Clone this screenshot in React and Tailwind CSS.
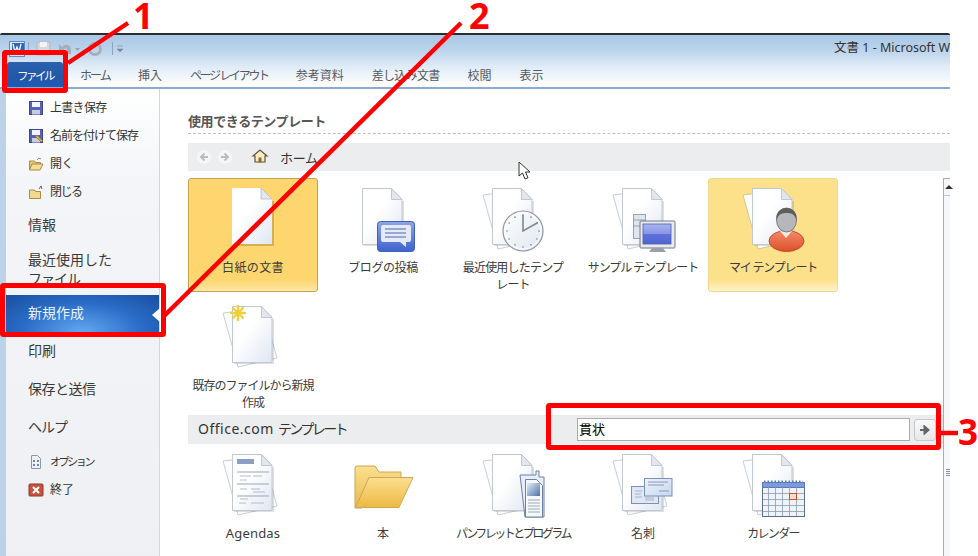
import React from "react";

const Back = () => <path d="M20 11L35 65L74 56L60 6z" fill="#fbfcfd" stroke="#c9ced6" strokeWidth="1" />;
const Doc = ({ fill = "url(#docg)", shadow = true }) => (
  <g>
    {shadow && <path d="M31 61h39V17" fill="none" stroke="#000" strokeOpacity="0.12" strokeWidth="2" />}
    <path d="M29.5 4.5h29l10.5 11v45H29.5z" fill={fill} stroke="#c2c8d1" />
    <path d="M58.5 4.5v11H69z" fill="#e2e6ee" stroke="#c2c8d1" />
  </g>
);

const Ico = ({ children }) => (
  <svg width="100" height="72" viewBox="0 0 100 72" className="shrink-0">
    {children}
  </svg>
);

const Blank = () => (
  <Ico>
    <path d="M31 61h39V17" fill="none" stroke="#8a6a20" strokeOpacity="0.35" strokeWidth="2" />
    <path d="M29 4h29l11 11v45H29z" fill="url(#docg)" />
    <path d="M58 4v11h11z" fill="#e2e6ee" stroke="#b8bcc2" strokeWidth="0.8" />
  </Ico>
);

const Blog = () => (
  <Ico>
    <Doc />
    <rect x="44.5" y="37.5" width="37" height="30" rx="3" fill="url(#blue)" stroke="#3f62b8" />
    <path d="M50 41h26a2 2 0 0 1 2 2v13a2 2 0 0 1-2 2h-3v5l-6-5H50a2 2 0 0 1-2-2V43a2 2 0 0 1 2-2z" fill="#e6eaf6" />
    <path d="M52 45h21M52 49h21M52 53h21" stroke="#7f93c8" strokeWidth="1.6" />
  </Ico>
);

const Clock = () => {
  const ticks = Array.from({ length: 12 }, (_, i) => i * 30);
  return (
    <Ico>
      <Back />
      <Doc />
      <circle cx="60" cy="47" r="20" fill="url(#clock)" stroke="#8d959f" strokeWidth="1.2" />
      <circle cx="60" cy="47" r="18" fill="none" stroke="#fff" strokeWidth="1" />
      {ticks.map((a) => (
        <circle key={a} cx={60 + 16 * Math.cos((a * Math.PI) / 180)} cy={47 + 16 * Math.sin((a * Math.PI) / 180)} r="0.8" fill="#7a828c" />
      ))}
      <path d="M60 31v16l15-8.500" fill="none" stroke="#808890" strokeWidth="1.6" />
    </Ico>
  );
};

const Sample = () => (
  <Ico>
    <Back />
    <Doc />
    <rect x="40.500" y="30.500" width="12" height="24" fill="#dfe5ee" stroke="#97a2b2" />
    <path d="M41 36h11M41 42h11" stroke="#97a2b2" />
    <rect x="47" y="37" width="35" height="27" rx="1" fill="#e8eaec" stroke="#727a84" />
    <rect x="50" y="40" width="28" height="20" fill="url(#blue2)" stroke="#4d5cae" strokeWidth="0.8" />
    <path d="M59 64h11l3 4H56z" fill="#9aa0a6" />
  </Ico>
);

const Mine = () => (
  <Ico>
    <path d="M20 11L35 65L74 56L60 6z" fill="#fff" stroke="#d6c88e" />
    <Doc />
    <ellipse cx="63.500" cy="57" rx="17.500" ry="10.500" fill="url(#red)" stroke="#b23d22" strokeWidth="0.8" />
    <path d="M57 47l6 7 6-7z" fill="#f6ece4" />
    <ellipse cx="63.500" cy="36" rx="10" ry="12" fill="#b6b7ba" stroke="#666" strokeWidth="0.8" />
    <path d="M53.500 36c-1-8 4-12 10-12s11 4 10 12c-2-6-5-7-10-7s-8 1-10 7z" fill="#5e5e60" />
  </Ico>
);

const Existing = () => (
  <Ico>
    <Back />
    <Doc />
    <g stroke="#f0cf3f" strokeWidth="2.400" strokeLinecap="round">
      <path d="M35 4v14M28 11h14M30 6l10 10M40 6L30 16" />
    </g>
  </Ico>
);

const Agenda = () => (
  <Ico>
    <Back />
    <Doc />
    <rect x="34" y="9" width="17" height="5" fill="#8b9ec4" />
    <path d="M34 22h32M34 34h32M34 46h32" stroke="#9aa5b8" />
    <path d="M37 26h11M50 26h9M37 30h7M37 39h7M48 39h9M50 42h12M37 49h8M48 53h13M36 53h7" stroke="#a9b5c8" strokeWidth="0.9" />
  </Ico>
);

const Folder = () => (
  <Ico>
    <path d="M22 58V18a2 2 0 0 1 2-2h18l4 6h22v8H38l-9 28z" fill="url(#fold1)" stroke="#cfa655" />
    <path d="M22.500 57.500L36 27.500h44L66 57.500z" fill="url(#fold2)" stroke="#cfa655" />
  </Ico>
);

const Pamphlet = () => (
  <Ico>
    <Back />
    <Doc />
    <path d="M57 25h16v-4h3v6h5v40H62z" fill="#e8eef7" stroke="#6d80a4" />
    <path d="M62.500 29.500h11l6 6v31.500h-17z" fill="#f5f7fb" stroke="#6d80a4" />
    <rect x="64" y="33" width="13" height="13" fill="url(#blue3)" />
    <path d="M65 50h12M65 53h12M65 56h12M65 59h12M65 62h12" stroke="#93a0b5" strokeWidth="0.9" />
  </Ico>
);

const Cards = () => (
  <Ico>
    <Back />
    <Doc />
    <rect x="38.500" y="36.500" width="27" height="17" fill="#dfe7f4" stroke="#7c90b8" />
    <path d="M42 41h7M42 44h6M42 47h7M52 48h9M52 50h9" stroke="#9fadc4" strokeWidth="0.9" />
    <rect x="51.500" y="28.500" width="27.500" height="17.500" fill="url(#card)" stroke="#7c90b8" />
    <path d="M55 32h20M55 35h16M66 41h10" stroke="#7f90ad" strokeWidth="0.9" />
  </Ico>
);

const Calendar = () => {
  const xs = [45.500, 52.500, 59.500, 66.500, 73.500];
  const ys = [43.500, 49.500, 55.500, 61.500];
  return (
    <Ico>
      <Back />
      <Doc />
      <rect x="39.500" y="33.500" width="42" height="33" fill="#eef2f9" stroke="#5e6d86" />
      <rect x="39.500" y="32.500" width="42" height="5" fill="#7b9bdc" stroke="#5d78b8" />
      <path d="M41 31.500h39" stroke="#5d78b8" strokeWidth="2" strokeDasharray="1.500 2" />
      {xs.map((x) => <path key={x} d={`M${x} 37v29`} stroke="#8d99ad" strokeWidth="0.8" />)}
      {ys.map((y) => <path key={y} d={`M40 ${y}h41`} stroke="#8d99ad" strokeWidth="0.8" />)}
      <rect x="66.500" y="43.500" width="7" height="6" fill="#f7dccb" stroke="#c8552e" />
    </Ico>
  );
};

const Tile = ({ Icon, label, tx = "", variant }) => {
  const v =
    variant === "a"
      ? "border border-[#c4a24e] bg-[linear-gradient(#fdd66f_0%,#fdd66f_90%,#fde7a6_100%)]"
      : variant === "b"
      ? "border border-[#eed98f] bg-[linear-gradient(#fde08a_0%,#fde08a_90%,#fef3cd_100%)]"
      : "border border-transparent";
  return (
    <div className={`w-[130px] h-[114px] rounded-[3px] flex flex-col items-center pt-[5px] ${v}`}>
      <Icon />
      <div className={`mt-[3px] text-[12px] leading-[17px] text-center text-[#3b3b3b] whitespace-nowrap ${tx}`}>{label}</div>
    </div>
  );
};

const Tab = ({ children, tx = "" }) => (
  <div className={`px-[14px] text-[12px] leading-[27px] text-[#555a60] whitespace-nowrap ${tx}`}>{children}</div>
);

const SmallItem = ({ icon, children, tx = "" }) => (
  <div className="h-[28px] flex items-center pl-[22px] gap-[6px]">
    <svg width="16" height="16" viewBox="0 0 16 16" className="shrink-0">{icon}</svg>
    <span className={`whitespace-nowrap text-[#333] ${tx}`}>{children}</span>
  </div>
);

const BigItem = ({ children, tx = "" }) => (
  <div className={`h-[38px] pb-[2px] flex items-center pl-[22px] text-[14px] text-[#3a3a3a] whitespace-nowrap ${tx}`}>{children}</div>
);

const floppy = (
  <g>
    <rect x="1.500" y="1.500" width="13" height="13" fill="#5a62b5" stroke="#3d4590" />
    <rect x="4" y="2" width="8" height="5" fill="#f4f5fb" />
    <rect x="4" y="10" width="8" height="4.500" fill="#c8cbe2" />
  </g>
);
const floppyEdit = (
  <g>
    {floppy}
    <path d="M7 8l6 6 2-1-6-6z" fill="#d9a94a" stroke="#7a6a3a" strokeWidth="0.6" />
  </g>
);
const openFolder = (
  <g>
    <path d="M1.500 14V5h5l1 1.500h5V9" fill="#e9c675" stroke="#a98a4a" />
    <path d="M1.500 14l2.500-6h11l-3 6z" fill="#f7dc94" stroke="#a98a4a" />
    <path d="M9 4c1-2 3-2 4-1" fill="none" stroke="#7a8aa0" />
  </g>
);
const closeFolder = (
  <g>
    <path d="M1.500 14.500V6h5l1 1.500h5v7z" fill="#f3d98e" stroke="#a98a4a" />
    <path d="M11 5l2-3 1 3" fill="none" stroke="#5a6a80" />
  </g>
);
const optionIcon = (
  <g>
    <path d="M3.500 1.500h6l3 3v10h-9z" fill="#eef1f6" stroke="#8c97a8" />
    <path d="M5 6h2v2H5zM9 6h2v2H9zM5 10h2v2H5zM9 10h2v2H9z" fill="#6f87a8" />
  </g>
);
const exitIcon = (
  <g>
    <rect x="1" y="2" width="14" height="12" rx="1" fill="#c8523f" stroke="#8c3a2d" />
    <path d="M5 5l6 6M11 5l-6 6" stroke="#fff" strokeWidth="2" />
  </g>
);

export default function App() {
  return (
    <div className="relative w-[978px] h-[556px] overflow-hidden bg-white font-['Noto_Sans','Noto_Sans_CJK_JP',sans-serif]">
      <svg className="absolute w-0 h-0">
        <defs>
          <linearGradient id="docg" x1="0" y1="0" x2="1" y2="1">
            <stop offset="0.4" stopColor="#ffffff" />
            <stop offset="1" stopColor="#dfe6f2" />
          </linearGradient>
          <linearGradient id="blue" x1="0" y1="0" x2="0" y2="1">
            <stop offset="0" stopColor="#8ea5e4" />
            <stop offset="1" stopColor="#3f63cf" />
          </linearGradient>
          <linearGradient id="blue2" x1="0" y1="0" x2="0" y2="1">
            <stop offset="0" stopColor="#a9b5ee" />
            <stop offset="0.5" stopColor="#8896e6" />
            <stop offset="0.5" stopColor="#5f72dc" />
            <stop offset="1" stopColor="#5064d0" />
          </linearGradient>
          <linearGradient id="blue3" x1="0" y1="0" x2="1" y2="1">
            <stop offset="0" stopColor="#e6eef8" />
            <stop offset="1" stopColor="#4d72a8" />
          </linearGradient>
          <linearGradient id="clock" x1="0" y1="0" x2="1" y2="1">
            <stop offset="0" stopColor="#ffffff" />
            <stop offset="1" stopColor="#dde6ef" />
          </linearGradient>
          <linearGradient id="red" x1="0" y1="0" x2="0" y2="1">
            <stop offset="0" stopColor="#f58a6a" />
            <stop offset="1" stopColor="#dd4f2c" />
          </linearGradient>
          <linearGradient id="fold1" x1="0" y1="0" x2="0" y2="1">
            <stop offset="0" stopColor="#fbe08f" />
            <stop offset="1" stopColor="#e7b84f" />
          </linearGradient>
          <linearGradient id="fold2" x1="0" y1="0" x2="0" y2="1">
            <stop offset="0" stopColor="#fcdf8f" />
            <stop offset="1" stopColor="#ecb944" />
          </linearGradient>
          <linearGradient id="card" x1="0" y1="0" x2="1" y2="1">
            <stop offset="0" stopColor="#eef3fb" />
            <stop offset="1" stopColor="#c6d6ee" />
          </linearGradient>
        </defs>
      </svg>

      <div className="pt-[33px] w-[950px]">
        <div className="h-[2px] bg-[#2b2d30] rounded-t-[4px]" />
        <div className="h-[52px] bg-[linear-gradient(#a9c7e5_0%,#bcd4ec_30%,#dfebf6_60%,#f7fafd_88%,#ffffff_100%)] flex flex-col">
          <div className="h-[27px] flex items-start pl-[9px] pt-[4px]">
            <svg width="116" height="18" viewBox="0 0 116 18">
              <rect x="0.500" y="2.500" width="15" height="15" fill="#dfe9f6" stroke="#5f8ac8" />
              <rect x="3" y="4" width="12" height="11" fill="#2f66b5" />
              <path d="M4 5l2 8 2-5 2 5 2-8" fill="none" stroke="#fff" strokeWidth="1.300" />
              <path d="M19.500 3v13" stroke="#8fa6bd" />
              <rect x="28" y="3" width="13" height="13" rx="1" fill="#d8d8dc" stroke="#b6b3b8" />
              <rect x="31" y="3" width="7" height="5" fill="#f4f4f6" />
              <path d="M53 8c4-4 9-2 9 3v4h-4v-4c0-2-2-2-3-1l2 2h-7V5z" fill="#a7afb9" />
              <path d="M66 9h5l-2.500 3z" fill="#9aa5b2" />
              <circle cx="86" cy="10" r="5.500" fill="none" stroke="#a7afb9" strokeWidth="2.800" />
              <path d="M103.500 3v13" stroke="#8fa6bd" />
              <path d="M108 7h6M108 10h6l-3 3z" fill="#7d8a98" stroke="#7d8a98" strokeWidth="0.600" />
            </svg>
            <div className="ml-auto w-[116px] whitespace-nowrap text-[12.500px] text-[#333] leading-[18px]">文書 1 - Microsoft W</div>
          </div>
          <div className="h-[25px] flex items-start pl-[7px]">
            <div className="w-[56px] h-[25px] mr-[3px] rounded-t-[3px] bg-[linear-gradient(#2a62ae,#2458a6_55%,#1f5ab8)] text-white text-[11.500px] text-center leading-[27px] tracking-[-2.500px]">ファイル</div>
            <Tab tx="tracking-[-1.900px]">ホーム</Tab>
            <Tab>挿入</Tab>
            <Tab tx="tracking-[-2.350px]">ページ レイアウト</Tab>
            <Tab>参考資料</Tab>
            <Tab tx="tracking-[-0.700px]">差し込み文書</Tab>
            <Tab>校閲</Tab>
            <Tab>表示</Tab>
          </div>
        </div>
        <div className="h-[2px] bg-[#8dabd0]" />
        <div className="flex h-[467px] bg-white">
          <div className="w-[160px] shrink-0 border-l-[6px] border-l-[#bcd2e8] border-r border-r-[#d3d7dc] bg-[linear-gradient(#ffffff_0%,#f3f5f8_20%,#eef0f3_100%)] pt-[5px]">
            <SmallItem icon={floppy} tx="text-[12px] tracking-[-0.700px]">上書き保存</SmallItem>
            <SmallItem icon={floppyEdit} tx="text-[12px] tracking-[-1px]">名前を付けて保存</SmallItem>
            <SmallItem icon={openFolder} tx="text-[12px] tracking-[-0.500px]">開く</SmallItem>
            <SmallItem icon={closeFolder} tx="text-[12px] tracking-[-1.500px]">閉じる</SmallItem>
            <BigItem>情報</BigItem>
            <div className="h-[51px] pt-[6px] pl-[22px] text-[14px] leading-[19px] text-[#3a3a3a] whitespace-nowrap">最近使用した<br /><span className="tracking-[-1px]">ファイル</span></div>
            <div className="h-[37px] pb-[2px] flex items-center pl-[22px] text-[14px] text-[#eaf2fc] bg-[radial-gradient(ellipse_at_50%_100%,#62a8f0_0%,#2a6cc8_55%,#1a4f9e_100%)] relative">
              新規作成
              <div className="absolute right-[-1px] top-[13px] w-0 h-0 border-y-[7px] border-y-transparent border-r-[8px] border-r-white" />
            </div>
            <BigItem>印刷</BigItem>
            <BigItem tx="tracking-[-0.500px]">保存と送信</BigItem>
            <BigItem tx="tracking-[-1px]">ヘルプ</BigItem>
            <div className="mt-[2px]">
              <SmallItem icon={optionIcon} tx="text-[11px] tracking-[-2.400px]">オプション</SmallItem>
              <SmallItem icon={exitIcon} tx="text-[12px]">終了</SmallItem>
            </div>
          </div>
          <div className="flex-1 min-w-0 pl-[28px]">
            <div className="h-[45px] pt-[23px] text-[13px] leading-[18px] font-semibold text-[#555] whitespace-nowrap tracking-[-0.400px] border-b border-dashed border-b-[#bdbdbd]">使用できるテンプレート</div>
            <div className="mt-[9px] h-[28px] bg-[#ecedef] flex items-center pl-[9px]">
              <svg width="90" height="20" viewBox="0 0 90 20" className="shrink-0">
                <circle cx="7" cy="10" r="7" fill="#f6f6f7" />
                <path d="M11 10H5M7.500 6.500L4 10l3.500 3.500" fill="none" stroke="#b9bdc2" strokeWidth="2" />
                <circle cx="28" cy="10" r="7" fill="#f6f6f7" />
                <path d="M24 10h6M27.500 6.500L31 10l-3.500 3.500" fill="none" stroke="#b9bdc2" strokeWidth="2" />
                <path d="M56 9l7-6 7 6h-2v6h-10V9z" fill="#f8ecc0" stroke="#5d5442" strokeWidth="1.200" />
                <rect x="61.500" y="10.500" width="3" height="5" fill="#8d6a3a" />
              </svg>
              <span className="ml-[-7px] mt-[3px] text-[13px] text-[#333] tracking-[-0.300px]">ホーム</span>
            </div>
            <div className="mt-[7px] flex h-[378px] items-stretch">
              <div className="w-[755px] shrink-0 overflow-hidden">
                <div className="grid grid-cols-[repeat(5,130px)]">
                  <Tile Icon={Blank} label="白紙の文書" tx="tracking-[0.400px]" variant="a" />
                  <Tile Icon={Blog} label="ブログの投稿" tx="tracking-[-0.400px]" />
                  <Tile Icon={Clock} label={<>最近使用したテンプ<br />レート</>} tx="tracking-[-0.800px]" />
                  <Tile Icon={Sample} label="サンプル テンプレート" tx="tracking-[-1.100px]" />
                  <Tile Icon={Mine} label="マイ テンプレート" variant="b" tx="tracking-[-1.200px]" />
                </div>
                <div className="mt-[4px] w-[130px]">
                  <Tile Icon={Existing} label={<>既存のファイルから新規<br />作成</>} tx="tracking-[-1px]" />
                </div>
                <div className="mt-[5px] ml-[-1px] h-[29px] bg-[#ecedef] flex items-center pl-[11px] pr-[7px]">
                  <span className="text-[14px] text-[#333] tracking-[0.500px] whitespace-nowrap mb-[2px]">Office.com <span className="tracking-[-2.600px]">テンプレート</span></span>
                  <div className="ml-auto w-[333px] h-[23px] border border-[#ababab] bg-white text-[13px] leading-[21px] pl-[1px] text-black">貫状</div>
                  <div className="ml-[4px] w-[22px] h-[22px] rounded-[3px] border border-[#c6c8cb] bg-[linear-gradient(#fafafa,#e6e7e9)] flex items-center justify-center">
                    <svg width="10" height="10" viewBox="0 0 10 10">
                      <path d="M0 5h6M4.500 1.500L8.500 5l-4 3.500z" fill="#666" stroke="#666" strokeWidth="2" />
                    </svg>
                  </div>
                </div>
                <div className="grid grid-cols-[repeat(5,130px)]">
                  <Tile Icon={Agenda} label={<span className="text-[13px] tracking-[0.200px]">Agendas</span>} />
                  <Tile Icon={Folder} label="本" />
                  <Tile Icon={Pamphlet} label="パンフレットとプログラム" tx="tracking-[-2.500px]" />
                  <Tile Icon={Cards} label="名刺" />
                  <Tile Icon={Calendar} label="カレンダー" tx="tracking-[-1.700px]" />
                </div>
              </div>
              <div className="w-[7px] shrink-0 border-l border-t border-[#a9adb2] bg-[#f6f7f8] flex flex-col">
                <div className="h-[17px] border-b border-[#c3c6ca] flex items-center pl-[1px]">
                  <div className="w-0 h-0 border-x-[4px] border-x-transparent border-b-[4px] border-b-[#333]" />
                </div>
                <div className="mt-[273px] ml-[2px] h-[7px] w-[4px] bg-[repeating-linear-gradient(#8a8f96_0,#8a8f96_1px,transparent_1px,transparent_2px)]" />
              </div>
            </div>
          </div>
        </div>
      </div>

      <svg className="absolute left-0 top-0 pointer-events-none" width="978" height="556" viewBox="0 0 978 556">
        <path d="M128 23L68 63" stroke="#ff0000" strokeWidth="4.500" />
        <path d="M461 23L163 317" stroke="#ff0000" strokeWidth="4.500" />
        <rect x="4.500" y="52.500" width="61" height="38" rx="1" fill="none" stroke="#ff0000" strokeWidth="5" />
        <rect x="2.500" y="285.500" width="161" height="49" rx="1" fill="none" stroke="#ff0000" strokeWidth="5" />
        <rect x="548.500" y="405.500" width="390" height="42" rx="1" fill="none" stroke="#ff0000" strokeWidth="5" />
        <path d="M941 433H958" stroke="#ff0000" strokeWidth="4.500" />
        <path d="M519 162v14l3.500-3 2.500 6 3-1.200-2.500-5.800H530z" fill="#fff" stroke="#333" strokeWidth="1" />
      </svg>
      <div className="absolute left-[133px] top-[1px] text-[36px] leading-[30px] font-bold text-[#ff0000]">1</div>
      <div className="absolute left-[469px] top-[1px] text-[36px] leading-[30px] font-bold text-[#ff0000]">2</div>
      <div className="absolute left-[958px] top-[417px] w-[20px] text-[35px] leading-[30px] font-bold text-[#ff0000]">3</div>
    </div>
  );
}
